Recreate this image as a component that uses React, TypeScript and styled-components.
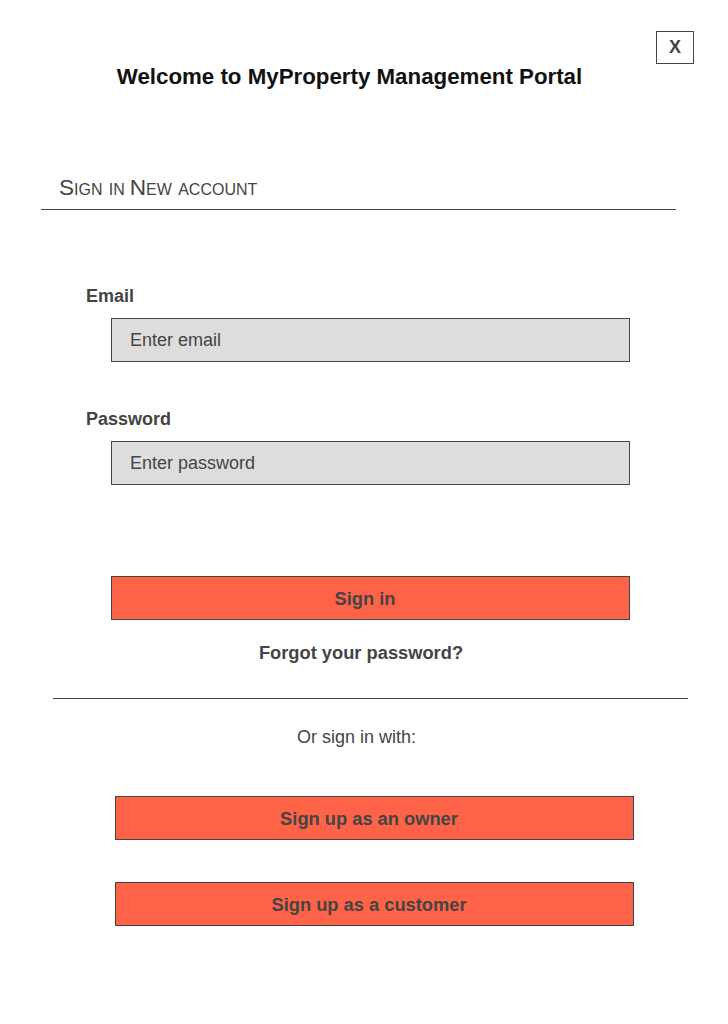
import React from "react";
import styled, { createGlobalStyle } from "styled-components";

const GlobalStyle = createGlobalStyle`
  html, body {
    margin: 0;
    padding: 0;
    background: #ffffff;
    font-family: "Liberation Sans", Arial, sans-serif;
  }
  * { box-sizing: border-box; }
`;

const Page = styled.div`
  width: 728px;
  min-height: 1024px;
  display: flex;
  flex-direction: column;
  color: #444444;
`;

const CloseRow = styled.div`
  display: flex;
  justify-content: flex-end;
  padding: 31px 34px 0 0;
`;

const CloseButton = styled.button`
  width: 38px;
  height: 33px;
  padding: 0;
  border: 1px solid #444444;
  background: #ffffff;
  color: #444444;
  font-family: "Liberation Sans", Arial, sans-serif;
  font-weight: 700;
  font-size: 18px;
  line-height: 31px;
  cursor: pointer;
`;

const Title = styled.h1`
  margin: 0 29px 0 0;
  text-align: center;
  font-size: 22.3px;
  line-height: 25px;
  font-weight: 700;
  color: #111111;
`;

const Tabs = styled.div`
  display: flex;
  gap: 5px;
  margin: 86px 52px 0 41px;
  padding: 0 0 8px 18px;
  border-bottom: 1px solid #444444;
`;

const Tab = styled.span`
  font-size: 22.6px;
  line-height: 26px;
  font-variant: small-caps;
  color: #444444;
  cursor: pointer;
`;

const Form = styled.form`
  display: flex;
  flex-direction: column;
  padding-left: 86px;
`;

const Label = styled.label<{ $top: number }>`
  margin-top: ${(p) => p.$top}px;
  font-size: 18px;
  line-height: 21px;
  font-weight: 700;
  color: #444444;
`;

const Input = styled.input`
  margin: 11px 0 0 25px;
  width: 519px;
  height: 44px;
  padding: 1px 0 0 18px;
  border: 1px solid #444444;
  background: #dddddd;
  font-family: "Liberation Sans", Arial, sans-serif;
  font-size: 18px;
  color: #444444;
  outline: none;
  &::placeholder {
    color: #444444;
    opacity: 1;
  }
`;

const ActionButton = styled.button<{ $top: number; $left: number }>`
  margin: ${(p) => p.$top}px 0 0 ${(p) => p.$left}px;
  width: 519px;
  height: 44px;
  padding: 1px 11px 0 0;
  border: 1px solid #444444;
  background: #ff6347;
  color: #444444;
  font-family: "Liberation Sans", Arial, sans-serif;
  font-weight: 700;
  font-size: 18.3px;
  cursor: pointer;
`;

const Forgot = styled.a`
  display: block;
  margin: 22px 6px 0 0;
  text-align: center;
  font-size: 18.3px;
  line-height: 21px;
  font-weight: 700;
  color: #444444;
  cursor: pointer;
`;

const Divider = styled.hr`
  margin: 35px 0 0 53px;
  width: 635px;
  border: none;
  border-top: 1px solid #444444;
  height: 0;
`;

const AltText = styled.p`
  margin: 28px 15px 0 0;
  text-align: center;
  font-size: 18px;
  line-height: 21px;
  color: #444444;
`;

const SignUpList = styled.div`
  display: flex;
  flex-direction: column;
`;

export default function App() {
  return (
    <>
      <GlobalStyle />
      <Page>
        <CloseRow>
          <CloseButton type="button">X</CloseButton>
        </CloseRow>
        <Title>Welcome to MyProperty Management Portal</Title>
        <Tabs>
          <Tab>Sign in</Tab>
          <Tab>New account</Tab>
        </Tabs>
        <Form onSubmit={(e) => e.preventDefault()}>
          <Label $top={76} htmlFor="email">Email</Label>
          <Input id="email" type="email" placeholder="Enter email" />
          <Label $top={47} htmlFor="password">Password</Label>
          <Input id="password" type="password" placeholder="Enter password" />
          <ActionButton type="submit" $top={91} $left={25}>Sign in</ActionButton>
        </Form>
        <Forgot>Forgot your password?</Forgot>
        <Divider />
        <AltText>Or sign in with:</AltText>
        <SignUpList>
          <ActionButton type="button" $top={48} $left={115}>Sign up as an owner</ActionButton>
          <ActionButton type="button" $top={42} $left={115}>Sign up as a customer</ActionButton>
        </SignUpList>
      </Page>
    </>
  );
}
